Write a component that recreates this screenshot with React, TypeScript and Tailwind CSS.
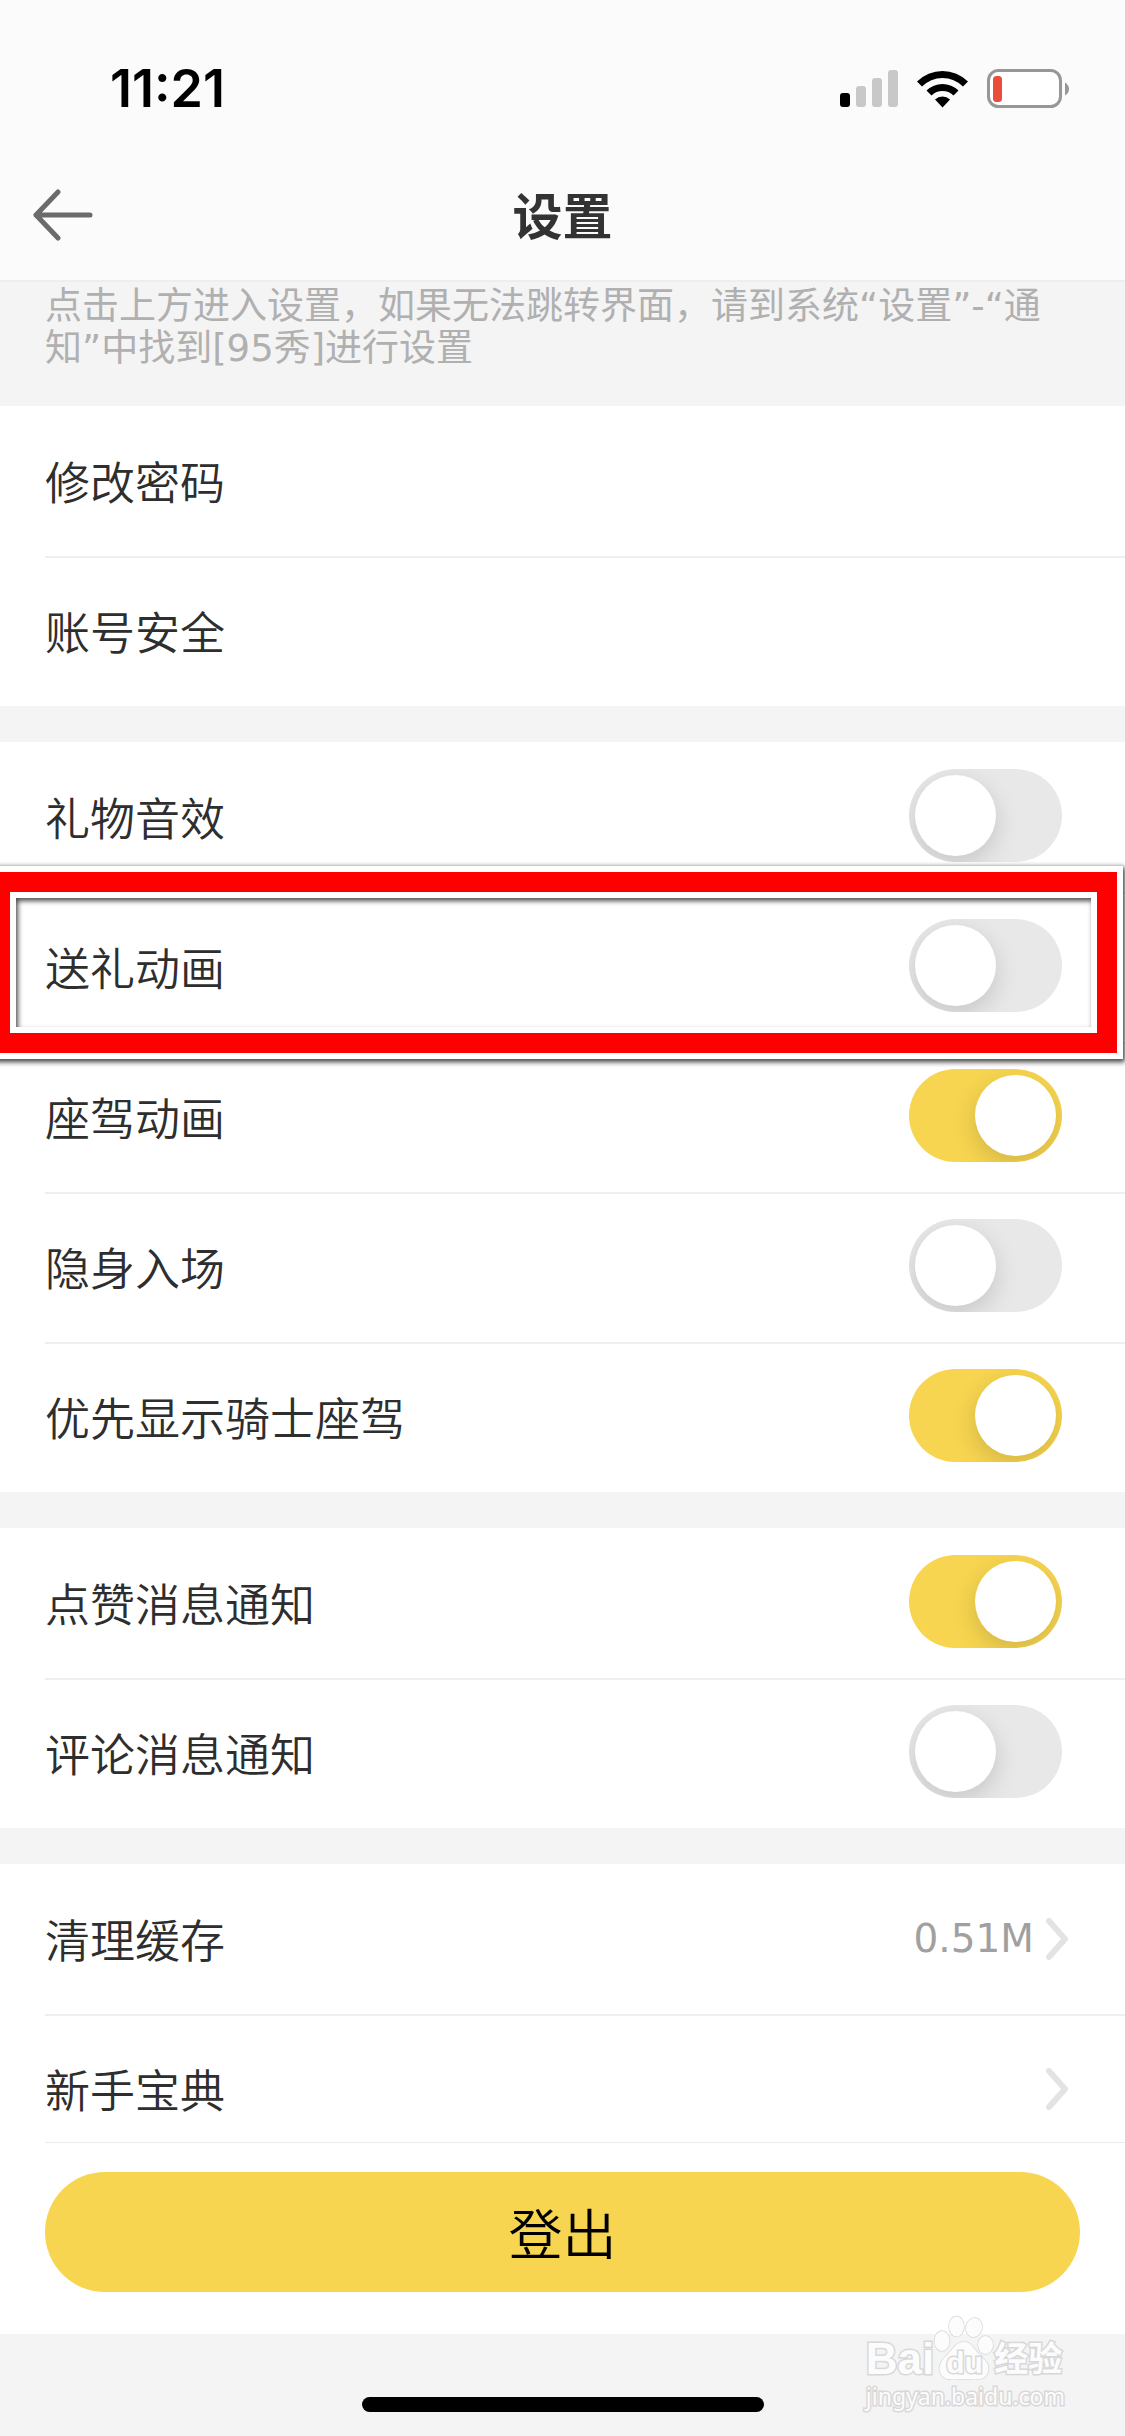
import { useState } from "react";
import type { ReactNode } from "react";

const initialToggles = {
  giftSound: false,
  giftAnimation: false,
  rideAnimation: true,
  invisibleEntry: false,
  knightRide: true,
  likeNotice: true,
  commentNotice: false,
};

type ToggleKey = keyof typeof initialToggles;

function StatusBar() {
  return (
    <div className="flex h-[150px] items-center justify-between pr-[56px] pl-[110px] pt-7">
      <span className="font-[Inter,sans-serif] text-[52px] leading-[60px] font-semibold text-black">
        11:21
      </span>
      <div className="flex items-center gap-[19px]">
        <svg width="58" height="38" viewBox="0 0 58 38" aria-hidden="true">
          <rect x="0" y="23" width="10" height="14" rx="3" fill="#000" />
          <rect x="16" y="16" width="10" height="21" rx="3" fill="#c8c8c8" />
          <rect x="32" y="8" width="10" height="29" rx="3" fill="#c8c8c8" />
          <rect x="48" y="0" width="10" height="37" rx="3" fill="#c8c8c8" />
        </svg>
        <svg width="51" height="38" viewBox="0 0 51 38" aria-hidden="true">
          <path d="M0 11.5A36 36 0 0 1 51 11.5L46 16.5A29 29 0 0 0 5 16.5Z" />
          <path d="M9.500 20.500A23 23 0 0 1 41.500 20.500L36.500 25.500A16 16 0 0 0 14.500 25.500Z" />
          <path d="M18 29.500A11 11 0 0 1 33 29.500L25.500 37.500Z" />
        </svg>
        <svg width="82" height="40" viewBox="0 0 82 40" aria-hidden="true">
          <rect x="1.500" y="1.500" width="72" height="36" rx="10" fill="#fff" stroke="#979797" strokeWidth="3" />
          <rect x="6" y="7" width="9" height="26" rx="3.500" fill="#eb4d3d" />
          <path d="M78 13.500Q82 16 82 20T78 26.500Z" fill="#979797" />
        </svg>
      </div>
    </div>
  );
}

function Header() {
  return (
    <header className="border-b-2 border-[#eeeeee] bg-[#fbfbfb]">
      <StatusBar />
      <div className="grid h-[130px] grid-cols-[1fr_auto_1fr] items-center px-[33px]">
        <button type="button" aria-label="返回" className="justify-self-start">
          <svg
            width="60"
            height="52"
            viewBox="0 0 60 52"
            fill="none"
            stroke="#6b6b6b"
            strokeWidth="5"
            strokeLinecap="round"
            strokeLinejoin="round"
          >
            <path d="M25 3L3 26L25 49M3 26H57" />
          </svg>
        </button>
        <h1 className="pb-1 text-[50px] leading-[60px] font-bold text-[#333333]">
          设置
        </h1>
      </div>
    </header>
  );
}

function Group({ children }: { children: ReactNode }) {
  return (
    <section className="bg-white [&>*+*]:before:absolute [&>*+*]:before:top-0 [&>*+*]:before:right-0 [&>*+*]:before:left-[45px] [&>*+*]:before:h-[2px] [&>*+*]:before:bg-[#efefef]">
      {children}
    </section>
  );
}

function Chevron() {
  return (
    <svg
      width="22"
      height="42"
      viewBox="0 0 22 42"
      fill="none"
      stroke="#e3e3e3"
      strokeWidth="6"
      strokeLinecap="round"
      strokeLinejoin="round"
      aria-hidden="true"
    >
      <path d="M3 3L19 21L3 39" />
    </svg>
  );
}

type LinkRowProps = {
  label: string;
  value?: string;
  arrow?: boolean;
};

function LinkRow({ label, value, arrow }: LinkRowProps) {
  return (
    <button
      type="button"
      className="relative flex h-[150px] w-full items-center gap-[12px] pr-[57px] pl-[45px] text-left"
    >
      <span className="flex-1">{label}</span>
      {value && (
        <span className="font-['DejaVu_Sans',sans-serif] text-[39px] leading-[48px] font-normal text-[#a0a0a0]">
          {value}
        </span>
      )}
      {arrow && <Chevron />}
    </button>
  );
}

// Red frame that sits on top of a row and slightly overlaps its neighbours.
function Highlight() {
  return (
    <span className="pointer-events-none absolute -top-[26px] right-[2px] -bottom-[17px] -left-[16px] z-10 border-6 border-white shadow-[1px_2px_5px_1px_rgba(0,0,0,0.75)]">
      <span className="block h-full border-20 border-[#ff0000]">
        <span className="block h-full border-6 border-white">
          <span className="block h-full shadow-[inset_2px_3px_5px_rgba(0,0,0,0.7)]" />
        </span>
      </span>
    </span>
  );
}

type ToggleRowProps = {
  label: string;
  checked: boolean;
  onChange: () => void;
  highlighted?: boolean;
};

function ToggleRow({ label, checked, onChange, highlighted }: ToggleRowProps) {
  return (
    <label className="relative flex h-[150px] items-center justify-between pr-[63px] pl-[45px]">
      {label}
      <input
        type="checkbox"
        role="switch"
        checked={checked}
        onChange={onChange}
        className="mb-1 h-[93px] w-[153px] appearance-none overflow-hidden rounded-full bg-[#e8e8e8] p-[6px] before:block before:size-[81px] before:rounded-full before:bg-white before:shadow-[0_8px_24px_rgba(0,0,0,0.15)] checked:bg-[#f7d550] checked:before:ml-[60px]"
      />
      {highlighted && <Highlight />}
    </label>
  );
}

function Watermark() {
  return (
    <div className="pointer-events-none absolute right-[60px] bottom-[27px] font-['Liberation_Sans','Noto_Sans_CJK_SC',sans-serif] text-[#fcfcfc] [-webkit-text-stroke:3px_#d8d8d8] [paint-order:stroke_fill]">
      <div className="flex items-end">
        <span className="text-[44px] leading-[48px] font-bold">Bai</span>
        <span className="relative h-[68px] w-[60px]">
          <svg
            width="60"
            height="66"
            viewBox="0 0 60 66"
            fill="#fcfcfc"
            stroke="#d8d8d8"
            strokeWidth="1.5"
            className="overflow-visible"
            aria-hidden="true"
          >
            <ellipse cx="8" cy="26" rx="7.500" ry="10" />
            <ellipse cx="22.500" cy="11.500" rx="7.500" ry="10" />
            <ellipse cx="40" cy="12.500" rx="8" ry="9.500" transform="rotate(15 40 12.5)" />
            <ellipse cx="51.500" cy="30" rx="7.500" ry="9" />
            <path d="M30 27C37 27 39 33 45 39C51 45 56 49 54 57C51 67 40 64 30 64C20 64 9 67 6 57C4 49 9 44 14 39C20 33 22 27 30 27Z" />
          </svg>
          <span className="absolute bottom-[2px] left-[12px] text-[30px] leading-[36px] font-bold">
            du
          </span>
        </span>
        <span className="text-[34px] leading-[48px] font-bold">经验</span>
      </div>
      <div className="font-['Noto_Sans',sans-serif] text-[23px] leading-[26px] font-normal">
        jingyan.baidu.com
      </div>
    </div>
  );
}

export default function App() {
  const [toggles, setToggles] = useState(initialToggles);

  const bind = (key: ToggleKey) => ({
    checked: toggles[key],
    onChange: () => setToggles((t) => ({ ...t, [key]: !t[key] })),
  });

  return (
    <div
      lang="zh-CN"
      className="relative flex h-screen flex-col overflow-hidden bg-[#f4f4f4] font-['Noto_Sans_CJK_SC',sans-serif] text-[45px] leading-[60px] font-[350] text-[#2e2e2e]"
    >
      <Header />

      <main className="min-h-0 flex-1 overflow-hidden">
        <p className="pt-[4px] pr-[72px] pb-[36px] pl-[45px] font-['DejaVu_Sans','Noto_Sans_CJK_SC',sans-serif] text-[37px] leading-[42px] font-normal text-[#b0b0b0]">
          点击上方进入设置，如果无法跳转界面，请到系统“设置”-“通知”中找到[95秀]进行设置
        </p>

        <div className="flex flex-col gap-[36px]">
          <Group>
            <LinkRow label="修改密码" />
            <LinkRow label="账号安全" />
          </Group>

          <Group>
            <ToggleRow label="礼物音效" {...bind("giftSound")} />
            <ToggleRow label="送礼动画" {...bind("giftAnimation")} highlighted />
            <ToggleRow label="座驾动画" {...bind("rideAnimation")} />
            <ToggleRow label="隐身入场" {...bind("invisibleEntry")} />
            <ToggleRow label="优先显示骑士座驾" {...bind("knightRide")} />
          </Group>

          <Group>
            <ToggleRow label="点赞消息通知" {...bind("likeNotice")} />
            <ToggleRow label="评论消息通知" {...bind("commentNotice")} />
          </Group>

          <Group>
            <LinkRow label="清理缓存" value="0.51M" arrow />
            <LinkRow label="新手宝典" arrow />
          </Group>
        </div>
      </main>

      <footer>
        <div className="bg-white px-[45px] pb-[42px]">
          <div className="-mr-[45px] h-px bg-[#ececec]" />
          <button
            type="button"
            className="mt-[29px] h-[120px] w-full rounded-full bg-[#f7d550] text-[54px] text-black"
          >
            登出
          </button>
        </div>
        <div className="flex h-[102px] items-end justify-center pb-[24px]">
          <div className="h-[15px] w-[402px] rounded-full bg-black" />
        </div>
      </footer>

      <Watermark />
    </div>
  );
}
